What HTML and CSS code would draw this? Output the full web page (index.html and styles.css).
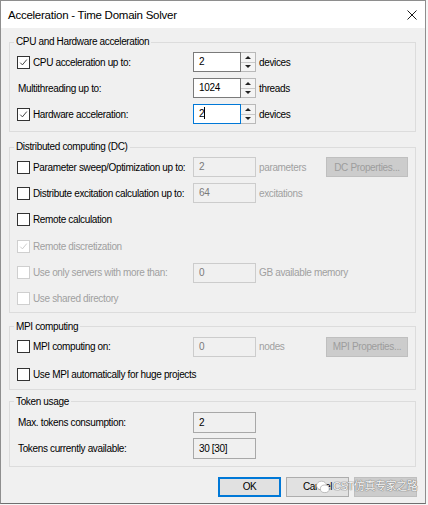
FILE: index.html
```html
<!DOCTYPE html>
<html lang="en">
<head>
  <meta charset="UTF-8">
  <title>Acceleration - Time Domain Solver</title>
  <link rel="stylesheet" href="styles.css">
</head>
<body>
  <div class="window">
    <div class="titlebar">
      <span class="title">Acceleration - Time Domain Solver</span>
      <svg class="close" width="10" height="10" viewBox="0 0 10 10">
        <path d="M0.5 0.5 L9.5 9.5 M9.5 0.5 L0.5 9.5" stroke="#1a1a1a" stroke-width="1" fill="none"/>
      </svg>
    </div>

    <div class="content">
      <!-- CPU / GPU -->
      <fieldset class="group cpu">
        <legend>CPU and Hardware acceleration</legend>
        <div class="row">
          <label class="check"><span class="box"><svg viewBox="0 0 12 12"><path d="M2.5 6.2 L4.8 8.6 L9.6 2.8"/></svg></span>CPU acceleration up to:</label>
          <div class="spin"><span class="field">2</span><span class="arrows"><span class="up"></span><span class="down"></span></span></div>
          <span class="unit">devices</span>
        </div>
        <div class="row">
          <label class="plain">Multithreading up to:</label>
          <div class="spin"><span class="field">1024</span><span class="arrows"><span class="up"></span><span class="down"></span></span></div>
          <span class="unit">threads</span>
        </div>
        <div class="row">
          <label class="check"><span class="box"><svg viewBox="0 0 12 12"><path d="M2.5 6.2 L4.8 8.6 L9.6 2.8"/></svg></span>Hardware acceleration:</label>
          <div class="spin"><span class="field focus">2<span class="caret"></span></span><span class="arrows"><span class="up"></span><span class="down"></span></span></div>
          <span class="unit">devices</span>
        </div>
      </fieldset>

      <!-- DC -->
      <fieldset class="group dc">
        <legend>Distributed computing (DC)</legend>
        <div class="row">
          <label class="check"><span class="box"></span>Parameter sweep/Optimization up to:</label>
          <span class="field off">2</span>
          <span class="unit off">parameters</span>
          <span class="btn off">DC Properties...</span>
        </div>
        <div class="row">
          <label class="check"><span class="box"></span>Distribute excitation calculation up to:</label>
          <span class="field off">64</span>
          <span class="unit off">excitations</span>
        </div>
        <div class="row">
          <label class="check"><span class="box"></span>Remote calculation</label>
        </div>
        <div class="row">
          <label class="check off"><span class="box"><svg viewBox="0 0 12 12"><path d="M2.5 6.2 L4.8 8.6 L9.6 2.8"/></svg></span>Remote discretization</label>
        </div>
        <div class="row">
          <label class="check off"><span class="box"></span>Use only servers with more than:</label>
          <span class="field off">0</span>
          <span class="unit off wide">GB available memory</span>
        </div>
        <div class="row">
          <label class="check off"><span class="box"></span>Use shared directory</label>
        </div>
      </fieldset>

      <!-- MPI -->
      <fieldset class="group mpi">
        <legend>MPI computing</legend>
        <div class="row">
          <label class="check"><span class="box"></span>MPI computing on:</label>
          <span class="field off">0</span>
          <span class="unit off">nodes</span>
          <span class="btn off">MPI Properties...</span>
        </div>
        <div class="row">
          <label class="check wide"><span class="box"></span>Use MPI automatically for huge projects</label>
        </div>
      </fieldset>

      <!-- tokens -->
      <fieldset class="group tokens">
        <legend>Token usage</legend>
        <div class="row">
          <label class="plain">Max. tokens consumption:</label>
          <span class="field ro">2</span>
        </div>
        <div class="row">
          <label class="plain">Tokens currently available:</label>
          <span class="field ro">30 [30]</span>
        </div>
      </fieldset>

      <div class="footer">
        <span class="btn default">OK</span>
        <span class="btn">Cancel</span>
        <span class="btn off"></span>
        <div class="watermark">
          <svg width="14" height="14" viewBox="0 0 14 14">
            <ellipse cx="5.5" cy="5.5" rx="5" ry="4.3" fill="#fff" stroke="#b0b0b0" stroke-width="0.8"/>
            <ellipse cx="8.8" cy="8.8" rx="4.4" ry="3.8" fill="#fff" stroke="#b0b0b0" stroke-width="0.8"/>
          </svg>
          <span>CST仿真专家之路</span>
        </div>
      </div>
    </div>
  </div>
</body>
</html>
```

FILE: styles.css
```css
body {
  margin: 0;
  background: #f6f6f6;
  font-family: "Liberation Sans", Arial, sans-serif;
  font-size: 10px;
  letter-spacing: -0.35px;
  color: #000;
}
.window {
  width: 424px;
  height: 502px;
  border: 1px solid #8e8e8e;
  border-bottom-color: #6f6f6f;
  background: #f0f0f0;
  display: flex;
  flex-direction: column;
}
.titlebar {
  height: 27px;
  background: #fff;
  display: flex;
  align-items: center;
  justify-content: space-between;
  padding: 0 8px 0 7px;
}
.title {
  font-size: 11.5px;
  letter-spacing: -0.25px;
  margin-top: 1px;
}
.close {
  display: block;
}
.content {
  padding: 8px 9px 0 8px;
  display: flex;
  flex-direction: column;
  gap: 8px;
}

/* group boxes */
.group {
  margin: 0;
  border: 1px solid #dcdcdc;
  padding: 4px 0 5px 7px;
  display: flex;
  flex-direction: column;
  gap: 6px;
  min-width: 0;
}
.group legend {
  padding: 0 2px;
  margin-left: -3px;
  line-height: 12px;
}
.group.cpu {
  padding-bottom: 7px;
}
.group.dc {
  gap: 6.4px;
  padding-bottom: 3px;
  margin-top: 1px;
}
.group.mpi {
  gap: 8px;
  padding-bottom: 4px;
}
.group.tokens {
  gap: 5px;
  padding-bottom: 7px;
  margin-top: -2px;
}
.tokens .row {
  height: 21px;
}

.row {
  display: grid;
  grid-template-columns: 176px 63px 70px 82px;
  align-items: center;
  height: 20px;
}
.check {
  display: flex;
  align-items: center;
  gap: 3px;
  white-space: nowrap;
}
.check.wide {
  grid-column: 1 / 4;
}
.plain {
  padding-left: 1px;
}
.box {
  width: 11px;
  height: 11px;
  border: 1px solid #333;
  background: #fff;
  display: inline-flex;
}
.box svg {
  width: 11px;
  height: 11px;
  fill: none;
  stroke: #333;
  stroke-width: 1;
}
.check.off {
  color: #a0a0a0;
}
.check.off .box {
  border-color: #cfcfcf;
}
.check.off .box svg {
  stroke: #c8c8c8;
}

/* edit fields */
.field {
  height: 20px;
  box-sizing: border-box;
  border: 1px solid #7a7a7a;
  background: #fff;
  padding: 3px 0 0 5px;
  display: flex;
  align-items: flex-start;
}
.tokens .field {
  height: 21px;
  padding-top: 4px;
}
.field.off {
  background: #f0f0f0;
  border-color: #cccccc;
  color: #7a7a7a;
}
.field.ro {
  background: #f0f0f0;
  border-color: #a8a8a8;
}
.field.focus {
  border-color: #0078d7;
}
.caret {
  width: 1px;
  height: 12px;
  background: #000;
  margin-top: -1px;
}
.spin {
  display: flex;
  height: 20px;
}
.spin .field {
  width: 48px;
}
.arrows {
  width: 15px;
  display: flex;
  flex-direction: column;
  box-sizing: border-box;
  border: 1px solid #b9b9b9;
  border-left: 0;
  background: #f4f4f4;
}
.arrows span {
  flex: 1;
  display: flex;
  align-items: center;
  justify-content: center;
}
.arrows .down {
  border-top: 1px solid #c9c9c9;
}
.arrows .up::after,
.arrows .down::after {
  content: "";
  border-left: 3px solid transparent;
  border-right: 3px solid transparent;
}
.arrows .up::after {
  border-bottom: 3px solid #222;
}
.arrows .down::after {
  border-top: 3px solid #222;
}
.unit {
  padding-left: 3px;
}
.unit.off {
  color: #a0a0a0;
}
.unit.wide {
  grid-column: 3 / 5;
}

/* buttons */
.btn {
  height: 20px;
  box-sizing: border-box;
  border: 1px solid #adadad;
  background: #e1e1e1;
  display: flex;
  align-items: center;
  justify-content: center;
}
.btn.off {
  background: #cccccc;
  border-color: #bfbfbf;
  color: #9d9d9d;
}
.btn.default {
  border: 2px solid #0078d7;
}
.footer {
  margin-top: 2px;
  margin-right: -1px;
  display: flex;
  justify-content: flex-end;
  gap: 5px;
  position: relative;
}
.footer .btn {
  width: 63px;
}
.watermark {
  position: absolute;
  left: 307px;
  top: 0;
  height: 20px;
  display: flex;
  align-items: center;
  gap: 3px;
  white-space: nowrap;
  font-family: "Liberation Sans", "Noto Sans CJK SC", sans-serif;
  font-size: 11px;
  line-height: 13px;
  letter-spacing: -0.4px;
  color: rgba(255, 255, 255, 0.95);
  text-shadow: 0 0 1px #7d7d7d, 0 0 1px #7d7d7d, 0 0 1px #7d7d7d;
}
```
